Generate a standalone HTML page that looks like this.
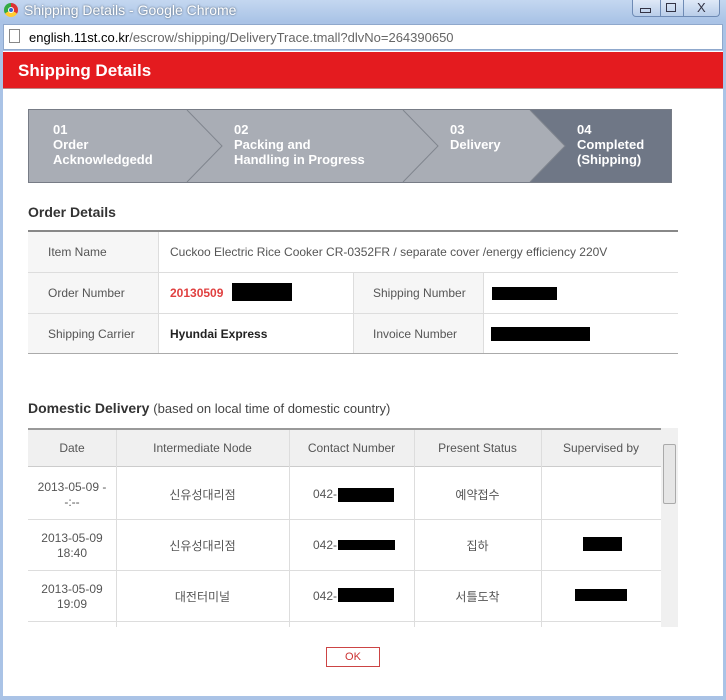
<!DOCTYPE html>
<html><head><meta charset="utf-8"><style>
*{margin:0;padding:0;box-sizing:border-box}
body{width:726px;height:700px;overflow:hidden;background:#aac3e6;font-family:"Liberation Sans","Noto Sans CJK KR",sans-serif;position:relative}
.a{position:absolute}
.t{font-size:12px;color:#555}
.lab{background:#f6f6f6}
.bk{background:#000}
</style></head><body>
<div class="a" style="left:0;top:0;width:726px;height:22px;background:linear-gradient(#c4d7f0,#a9c3e6)"></div>
<div class="a" style="left:4px;top:3px;width:14px;height:14px;border-radius:50%;background:conic-gradient(#d33 0 120deg,#fc3 120deg 240deg,#3a4 240deg);"></div>
<div class="a" style="left:8px;top:7px;width:6px;height:6px;border-radius:50%;background:#36c;border:1px solid #fff"></div>
<div class="a" style="left:24px;top:2px;font-size:14px;color:#fff;text-shadow:0 0 2px #456">Shipping Details - Google Chrome</div>
<div class="a" style="left:632px;top:0;width:88px;height:17px;border:1px solid #6f8bb5;border-top:none;border-radius:0 0 4px 4px;background:linear-gradient(#dfe9f7,#b9cde9)"></div>
<div class="a" style="left:660px;top:0;width:1px;height:17px;background:#6f8bb5"></div>
<div class="a" style="left:683px;top:0;width:1px;height:17px;background:#6f8bb5"></div>
<div class="a" style="left:640px;top:8px;width:11px;height:5px;border:1px solid #334"></div>
<div class="a" style="left:666px;top:3px;width:10px;height:9px;border:1px solid #334"></div>
<div class="a" style="left:697px;top:0;font-size:13px;color:#334">X</div>
<div class="a" style="left:3px;top:24px;width:720px;height:26px;background:#fff;border:1px solid #8fa8cc"></div>
<div class="a" style="left:9px;top:29px;width:11px;height:14px;border:1px solid #888;background:#fff"></div>
<div class="a" style="left:29px;top:30px;font-size:13px;color:#000">english.11st.co.kr<span style="color:#666">/escrow/shipping/DeliveryTrace.tmall?dlvNo=264390650</span></div>
<div class="a" style="left:3px;top:51px;width:720px;height:645px;background:#fff"></div>
<div class="a" style="left:3px;top:52px;width:720px;height:37px;background:#e41b1f;border-bottom:1px solid #b88"></div>
<div class="a" style="left:18px;top:61px;font-size:17px;font-weight:bold;color:#fff">Shipping Details</div>
<svg class="a" style="left:28px;top:109px" width="644" height="74">
<rect x="0.5" y="0.5" width="643" height="73" fill="#a9adb5" stroke="#777c86"/>
<polygon points="502,1 643,1 643,73 502,73 537,37" fill="#6f7786"/>
<polyline points="159,1 194,37 159,73" fill="none" stroke="#80858e"/>
<polyline points="375,1 410,37 375,73" fill="none" stroke="#80858e"/>
<polyline points="502,1 537,37 502,73" fill="none" stroke="#80858e"/>
</svg>
<div class="a" style="left:53px;top:122px;font-size:13px;font-weight:bold;color:#fff;line-height:15px">01<br>Order<br>Acknowledgedd</div>
<div class="a" style="left:234px;top:122px;font-size:13px;font-weight:bold;color:#fff;line-height:15px">02<br>Packing and<br>Handling in Progress</div>
<div class="a" style="left:450px;top:122px;font-size:13px;font-weight:bold;color:#fff;line-height:15px">03<br>Delivery</div>
<div class="a" style="left:577px;top:122px;font-size:13px;font-weight:bold;color:#fff;line-height:15px">04<br>Completed<br>(Shipping)</div>
<div class="a" style="left:28px;top:204px;font-size:14px;font-weight:bold;color:#333">Order Details</div>
<div class="a" style="left:28px;top:230px;width:650px;height:2px;background:#888"></div>
<div class="a lab" style="left:28px;top:232px;width:130px;height:122px"></div>
<div class="a lab" style="left:353px;top:273px;width:130px;height:81px"></div>
<div class="a" style="left:158px;top:232px;width:1px;height:122px;background:#ddd"></div>
<div class="a" style="left:353px;top:273px;width:1px;height:81px;background:#ddd"></div>
<div class="a" style="left:483px;top:273px;width:1px;height:81px;background:#ddd"></div>
<div class="a" style="left:28px;top:272px;width:650px;height:1px;background:#ddd"></div>
<div class="a" style="left:28px;top:313px;width:650px;height:1px;background:#ddd"></div>
<div class="a" style="left:28px;top:353px;width:650px;height:1px;background:#aaa"></div>
<div class="a t" style="left:48px;top:245px">Item Name</div>
<div class="a t" style="left:170px;top:245px">Cuckoo Electric Rice Cooker CR-0352FR / separate cover /energy efficiency 220V</div>
<div class="a t" style="left:48px;top:286px">Order Number</div>
<div class="a" style="left:170px;top:286px;font-size:12px;font-weight:bold;color:#e04040">20130509</div>
<div class="a bk" style="left:232px;top:283px;width:60px;height:18px"></div>
<div class="a t" style="left:373px;top:286px">Shipping Number</div>
<div class="a bk" style="left:492px;top:287px;width:65px;height:13px"></div>
<div class="a t" style="left:48px;top:327px">Shipping Carrier</div>
<div class="a" style="left:170px;top:327px;font-size:12px;font-weight:bold;color:#222">Hyundai Express</div>
<div class="a t" style="left:373px;top:327px">Invoice Number</div>
<div class="a bk" style="left:491px;top:327px;width:99px;height:14px"></div>
<div class="a" style="left:28px;top:400px;font-size:14px;font-weight:bold;color:#333">Domestic Delivery <span style="font-weight:normal;font-size:13px;color:#444">(based on local time of domestic country)</span></div>
<div class="a" style="left:28px;top:428px;width:633px;height:2px;background:#999"></div>
<div class="a" style="left:28px;top:430px;width:633px;height:37px;background:#f0f0f0;border-bottom:1px solid #ccc"></div>
<div class="a" style="left:28px;top:519px;width:633px;height:1px;background:#ddd"></div>
<div class="a" style="left:28px;top:570px;width:633px;height:1px;background:#ddd"></div>
<div class="a" style="left:28px;top:621px;width:633px;height:1px;background:#ddd"></div>
<div class="a" style="left:116px;top:430px;width:1px;height:197px;background:#ddd"></div>
<div class="a" style="left:289px;top:430px;width:1px;height:197px;background:#ddd"></div>
<div class="a" style="left:414px;top:430px;width:1px;height:197px;background:#ddd"></div>
<div class="a" style="left:541px;top:430px;width:1px;height:197px;background:#ddd"></div>
<div class="a" style="left:661px;top:428px;width:17px;height:199px;background:#f0f0f0"></div>
<div class="a" style="left:663px;top:444px;width:13px;height:60px;background:#e6e6e6;border:1px solid #aaa;border-radius:2px"></div>
<div class="a t" style="left:28px;top:441px;width:88px;text-align:center">Date</div>
<div class="a t" style="left:116px;top:441px;width:173px;text-align:center">Intermediate Node</div>
<div class="a t" style="left:289px;top:441px;width:125px;text-align:center">Contact Number</div>
<div class="a t" style="left:414px;top:441px;width:127px;text-align:center">Present Status</div>
<div class="a t" style="left:541px;top:441px;width:120px;text-align:center">Supervised by</div>
<div class="a t" style="left:28px;top:480px;width:88px;text-align:center;line-height:15px">2013-05-09 -<br>-:--</div>
<div class="a t" style="left:28px;top:531px;width:88px;text-align:center;line-height:15px">2013-05-09<br>18:40</div>
<div class="a t" style="left:28px;top:582px;width:88px;text-align:center;line-height:15px">2013-05-09<br>19:09</div>
<div class="a t" style="left:116px;top:486px;width:173px;text-align:center">신유성대리점</div>
<div class="a t" style="left:116px;top:537px;width:173px;text-align:center">신유성대리점</div>
<div class="a t" style="left:116px;top:588px;width:173px;text-align:center">대전터미널</div>
<div class="a t" style="left:313px;top:487px">042-</div><div class="a bk" style="left:338px;top:488px;width:56px;height:14px"></div>
<div class="a t" style="left:313px;top:538px">042-</div><div class="a bk" style="left:338px;top:540px;width:57px;height:10px"></div>
<div class="a t" style="left:313px;top:589px">042-</div><div class="a bk" style="left:338px;top:588px;width:56px;height:14px"></div>
<div class="a t" style="left:414px;top:486px;width:127px;text-align:center">예약접수</div>
<div class="a t" style="left:414px;top:537px;width:127px;text-align:center">집하</div>
<div class="a t" style="left:414px;top:588px;width:127px;text-align:center">서틀도착</div>
<div class="a bk" style="left:583px;top:537px;width:39px;height:14px"></div>
<div class="a bk" style="left:575px;top:589px;width:52px;height:12px"></div>
<div class="a" style="left:326px;top:647px;width:54px;height:20px;border:1px solid #c44;background:#fff;font-size:11px;color:#c33;text-align:center;line-height:18px">OK</div>
</body></html>
